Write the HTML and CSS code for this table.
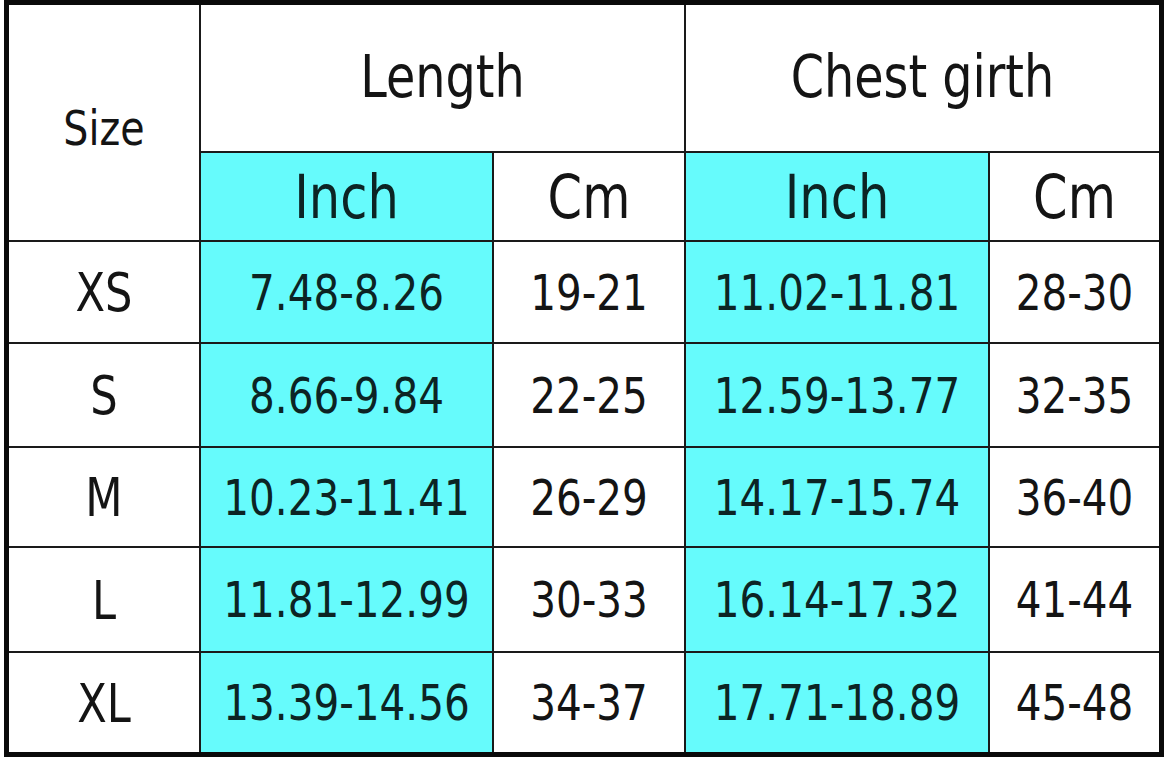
FILE: index.html
```html
<!DOCTYPE html>
<html lang="en">
<head>
<meta charset="utf-8">
<title>Size chart</title>
<link rel="stylesheet" href="styles.css">
</head>
<body>
<div class="page">
  <div class="chart">
    <div class="cell size-head"><span class="t">Size</span></div>
    <div class="cell group-head span2"><span class="t">Length</span></div>
    <div class="cell group-head span2"><span class="t">Chest girth</span></div>
    <div class="cell unit cyan"><span class="t">Inch</span></div>
    <div class="cell unit"><span class="t">Cm</span></div>
    <div class="cell unit cyan"><span class="t">Inch</span></div>
    <div class="cell unit"><span class="t">Cm</span></div>

    <div class="cell label"><span class="t">XS</span></div>
    <div class="cell val cyan"><span class="t">7.48-8.26</span></div>
    <div class="cell val"><span class="t">19-21</span></div>
    <div class="cell val cyan"><span class="t">11.02-11.81</span></div>
    <div class="cell val"><span class="t">28-30</span></div>

    <div class="cell label"><span class="t">S</span></div>
    <div class="cell val cyan"><span class="t">8.66-9.84</span></div>
    <div class="cell val"><span class="t">22-25</span></div>
    <div class="cell val cyan"><span class="t">12.59-13.77</span></div>
    <div class="cell val"><span class="t">32-35</span></div>

    <div class="cell label"><span class="t">M</span></div>
    <div class="cell val cyan"><span class="t">10.23-11.41</span></div>
    <div class="cell val"><span class="t">26-29</span></div>
    <div class="cell val cyan"><span class="t">14.17-15.74</span></div>
    <div class="cell val"><span class="t">36-40</span></div>

    <div class="cell label"><span class="t">L</span></div>
    <div class="cell val cyan"><span class="t">11.81-12.99</span></div>
    <div class="cell val"><span class="t">30-33</span></div>
    <div class="cell val cyan"><span class="t">16.14-17.32</span></div>
    <div class="cell val"><span class="t">41-44</span></div>

    <div class="cell label"><span class="t">XL</span></div>
    <div class="cell val cyan"><span class="t">13.39-14.56</span></div>
    <div class="cell val"><span class="t">34-37</span></div>
    <div class="cell val cyan"><span class="t">17.71-18.89</span></div>
    <div class="cell val"><span class="t">45-48</span></div>
  </div>
</div>
</body>
</html>
```

FILE: styles.css
```css
html, body {
  margin: 0;
  padding: 0;
  background: #ffffff;
}

.page {
  padding: 0 0 0 4px;
}

.chart {
  width: 1150px;
  border: 5px solid #0a0a0a;
  background: #1a1a1a;
  display: grid;
  grid-template-columns: 190px 291px 190px 302px 169px;
  grid-template-rows: 146px 87px 100px 102px 98px 103px 99px;
  gap: 2px;
  font-family: "DejaVu Sans Condensed", "DejaVu Sans", sans-serif;
  color: #141414;
}

.cell {
  background: #ffffff;
  display: flex;
  align-items: center;
  justify-content: center;
  white-space: nowrap;
}

.t {
  display: inline-block;
  transform: scaleY(1.1);
}

.cyan {
  background: #66fbfc;
  color: #0c2424;
}

.size-head {
  grid-row: span 2;
  font-size: 44px;
  padding-top: 10px;
}

.span2 {
  grid-column: span 2;
}

.group-head {
  font-size: 53px;
  padding-bottom: 4px;
}

.unit {
  font-size: 55px;
}

.label {
  font-size: 48px;
}

.val {
  font-size: 45px;
}
```
